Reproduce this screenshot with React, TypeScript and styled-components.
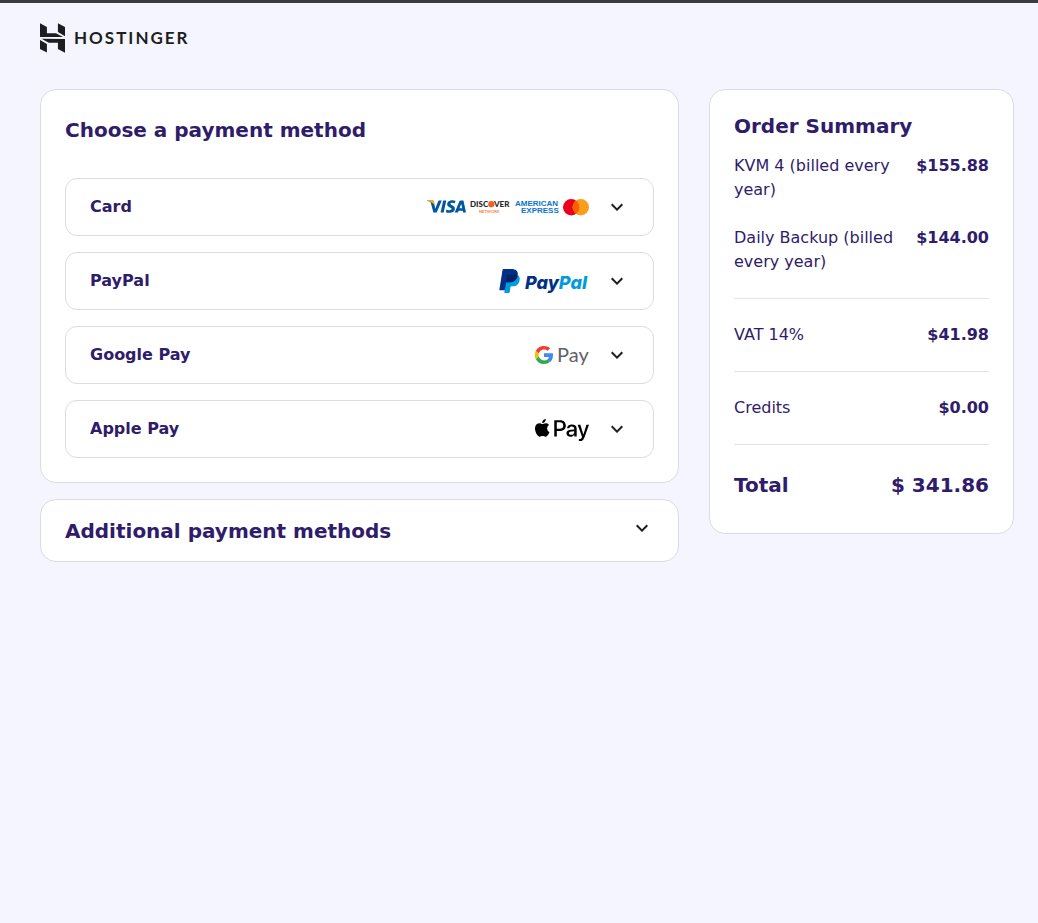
import React from "react";
import styled, { createGlobalStyle } from "styled-components";
import { FaApplePay } from "react-icons/fa";
import { SiVisa } from "react-icons/si";

const GlobalStyle = createGlobalStyle`
  *, *::before, *::after { box-sizing: border-box; }
  body {
    margin: 0;
    background: #f4f5ff;
    color: #2f1c6a;
    font-family: "DejaVu Sans", sans-serif;
    font-size: 16px;
    line-height: 24px;
  }
`;

const Page = styled.div`
  border-top: 3px solid #3b3b3d;
`;

const Header = styled.header`
  display: flex;
  padding: 20px 24px 36px 40px;
`;

const HomeLink = styled.a`
  display: flex;
  align-items: center;
  gap: 9px;
  height: 30px;
  color: #1d1e20;
  text-decoration: none;
`;

const Wordmark = styled.span`
  font-family: Lato, sans-serif;
  font-size: 17px;
  font-weight: 700;
  letter-spacing: 2px;
`;

const Columns = styled.main`
  display: grid;
  grid-template-columns: minmax(0, 1fr) 305px;
  align-items: start;
  gap: 30px;
  padding: 0 24px 24px 40px;
`;

const Stack = styled.div`
  display: flex;
  flex-direction: column;
  gap: 16px;
`;

const Panel = styled.section`
  padding: 24px;
  border: 1px solid #dadce0;
  border-radius: 16px;
  background: #fff;
`;

const Title = styled.h2<{ $tall?: boolean }>`
  margin: 0;
  font-size: 20px;
  font-weight: 700;
  line-height: ${(p) => (p.$tall ? 32 : 24)}px;
`;

const MethodList = styled(Stack)`
  margin-top: 32px;
`;

const Method = styled.button`
  display: flex;
  align-items: center;
  gap: 16px;
  width: 100%;
  height: 58px;
  padding: 0 24px;
  border: 1px solid #dadce0;
  border-radius: 12px;
  background: #fff;
  color: inherit;
  font: inherit;
  font-weight: 700;
  text-align: left;
  cursor: pointer;
`;

const MethodName = styled.span`
  flex: 1;
`;

const Logos = styled.span`
  display: flex;
  align-items: center;
  gap: 4px;

  svg { display: block; }
`;

const ApplePayLogo = styled(FaApplePay)`
  margin-top: 2px;
`;

const MoreMethods = styled.button`
  display: flex;
  align-items: flex-start;
  justify-content: space-between;
  width: 100%;
  padding: 16px 24px 15px;
  border: 1px solid #dadce0;
  border-radius: 16px;
  background: #fff;
  color: inherit;
  font: inherit;
  font-size: 20px;
  font-weight: 700;
  line-height: 30px;
  text-align: left;
  cursor: pointer;
`;

const Lines = styled.dl`
  display: flex;
  flex-direction: column;
  gap: 24px;
  margin: 16px 0 0;
`;

const Line = styled.div<{ $divided?: boolean }>`
  display: flex;
  justify-content: space-between;
  gap: 16px;
  padding-top: ${(p) => (p.$divided ? 24 : 0)}px;
  border-top: ${(p) => (p.$divided ? "1px solid #e2e3e6" : "0")};

  dt, dd { margin: 0; }
  dd { font-weight: 700; white-space: nowrap; }
`;

const TotalLine = styled(Line)`
  padding-bottom: 8px;
  font-size: 20px;
  font-weight: 700;
  line-height: 32px;
`;

const Chevron = () => (
  <svg width="24" height="24" viewBox="0 0 24 24" fill="#1d1e20" aria-hidden="true">
    <path d="M16.59 8.59 12 13.17 7.41 8.59 6 10l6 6 6-6z" />
  </svg>
);

const HostingerMark = () => (
  <svg width="25" height="30" viewBox="1.8 0 20.4 24" fill="currentColor" aria-hidden="true">
    <path d="M16.415 0v7.16l5.785 3.384V2.949L16.415 0ZM1.8 0v11.237h18.815L14.89 8.09l-7.457-.003V3.024L1.8 0Zm14.615 20.894v-5.019l-7.514-.005c.007.033-5.82-3.197-5.82-3.197l19.119.091V24l-5.785-3.106ZM1.8 13.551v7.343l5.633 2.949v-6.988L1.8 13.551Z" />
  </svg>
);

const VisaLogo = () => (
  <svg width="39" height="14" viewBox="0 0 39 14" aria-label="Visa">
    <SiVisa x="0" y="-13" size={39} color="#01579f" />
    <path d="M0 0h5q1.500 0 2 1.500l1 4.500Q6 2 0 .4z" fill="#f7a32b" />
  </svg>
);

const DiscoverLogo = () => (
  <svg width="40" height="14" viewBox="0 0 40 14" fontFamily="Lato, sans-serif" fontWeight="900">
    <text x="0" y="7" fontSize="8" fill="#25282b">DISC</text>
    <circle cx="21.300" cy="4.200" r="3.100" fill="#f26122" />
    <text x="24" y="7" fontSize="8" fill="#25282b">VER</text>
    <text x="9" y="13" fontSize="4" fontWeight="700" fill="#f47b3a">NETWORK</text>
  </svg>
);

const AmexLogo = () => (
  <svg
    width="45"
    height="14"
    viewBox="0 0 45 14"
    fill="#0b74d1"
    fontFamily="Liberation Sans, sans-serif"
    fontWeight="700"
    fontSize="8"
  >
    <text x="1" y="6">AMERICAN</text>
    <text x="7" y="13">EXPRESS</text>
  </svg>
);

const MastercardLogo = () => (
  <svg width="26" height="17" viewBox="0 0 26 17" aria-label="Mastercard">
    <circle cx="8.200" cy="8.200" r="8.200" fill="#eb001b" />
    <circle cx="17.800" cy="8.200" r="8.200" fill="#f79e1b" />
    <path d="M13 1.550a8.200 8.200 0 0 1 0 13.300 8.200 8.200 0 0 1 0-13.300z" fill="#ff5f00" />
  </svg>
);

const PayPalLogo = () => (
  <svg width="90" height="26" viewBox="0 0 90 26" aria-label="PayPal">
    <svg width="21" height="24" x="0" y="1" viewBox="0 0 25.400 30.200">
      <path fill="#003087" d="M7.266 29.154l.523-3.322-1.165-.027H1.061L4.927 1.292a.316.316 0 01.314-.268h9.380c3.114 0 5.263.648 6.385 1.927.526.6.861 1.227 1.023 1.917.17.724.173 1.589.007 2.644l-.012.077v.676l.526.298a3.690 3.690 0 011.065.812c.45.513.741 1.165.864 1.938.127.795.085 1.741-.123 2.812-.24 1.232-.628 2.305-1.152 3.183a6.547 6.547 0 01-1.825 2c-.696.494-1.523.869-2.458 1.109-.906.236-1.939.355-3.072.355h-.73c-.522 0-1.029.188-1.427.525a2.210 2.210 0 00-.744 1.328l-.055.299-.924 5.855-.042.215c-.011.068-.03.102-.058.125a.155.155 0 01-.096.035H7.266z" />
      <path fill="#009cde" d="M23.048 7.667c-.028.179-.06.362-.096.55-1.237 6.351-5.469 8.545-10.874 8.545H9.326c-.661 0-1.218.48-1.321 1.132L6.596 26.830l-.399 2.533a.704.704 0 00.695.814h4.881c.578 0 1.069-.42 1.160-.99l.048-.248.919-5.832.059-.32c.09-.572.582-.992 1.160-.992h.73c4.729 0 8.431-1.920 9.513-7.476.452-2.321.218-4.259-.978-5.622a4.667 4.667 0 00-1.336-1.030z" />
      <path fill="#012169" d="M21.754 7.151a9.757 9.757 0 00-1.203-.267 15.284 15.284 0 00-2.426-.177h-7.352a1.172 1.172 0 00-1.159.992L8.050 17.605l-.045.289a1.336 1.336 0 011.321-1.132h2.752c5.405 0 9.637-2.195 10.874-8.545.037-.188.068-.371.096-.55a6.594 6.594 0 00-1.017-.429 9.045 9.045 0 00-.277-.087z" />
      <path fill="#003087" d="M9.614 7.699a1.169 1.169 0 011.159-.991h7.352c.871 0 1.684.057 2.426.177a9.757 9.757 0 011.481.353c.365.121.704.264 1.017.429.368-2.347-.003-3.945-1.272-5.392C20.378.682 17.853 0 14.622 0h-9.380c-.66 0-1.223.48-1.325 1.133L.01 25.898a.806.806 0 00.795.932h5.791l1.454-9.225 1.564-9.906z" />
    </svg>
    <text
      x="26"
      y="21"
      fontFamily="Inter, sans-serif"
      fontSize="18"
      fontStyle="italic"
      fontWeight="800"
      fill="#003087"
    >
      Pay<tspan fill="#009cde">Pal</tspan>
    </text>
  </svg>
);

const GooglePayLogo = () => (
  <svg width="54" height="28" viewBox="0 0 54 28" aria-label="Google Pay">
    <svg width="18" height="18" x="0" y="5" viewBox="4 4 40 40">
      <path fill="#4285f4" d="M43.600 20.100H24v8.200h11.200a9.600 9.600 0 0 1-4.150 6.300l6.700 5.200C41.700 36.200 44 30.900 44 24.400c0-1.500-.1-2.900-.4-4.300z" />
      <path fill="#34a853" d="M24 44c5.500 0 10.100-1.800 13.500-4.900l-6.600-5.100c-1.800 1.200-4.150 2-6.900 2-5.300 0-9.800-3.600-11.400-8.400l-6.800 5.200A20 20 0 0 0 24 44z" />
      <path fill="#fbbc04" d="M12.600 27.900a12 12 0 0 1 0-7.700l-6.800-5.300a20 20 0 0 0 0 18.200z" />
      <path fill="#ea4335" d="M24 11.900c3 0 5.700 1 7.800 3.100l5.900-5.900C34.100 5.800 29.500 4 24 4A20 20 0 0 0 5.800 15l6.800 5.300c1.600-4.800 6.100-8.400 11.400-8.400z" />
    </svg>
    <text x="22" y="21" fontFamily="Lato, sans-serif" fontSize="20" fontWeight="400" fill="#5f6368">
      Pay
    </text>
  </svg>
);

const methods = [
  {
    name: "Card",
    logo: (
      <>
        <VisaLogo />
        <DiscoverLogo />
        <AmexLogo />
        <MastercardLogo />
      </>
    ),
  },
  { name: "PayPal", logo: <PayPalLogo /> },
  { name: "Google Pay", logo: <GooglePayLogo /> },
  { name: "Apple Pay", logo: <ApplePayLogo size={54} color="#000" /> },
];

const lines = [
  { label: "KVM 4 (billed every year)", price: "$155.88", divided: false },
  { label: "Daily Backup (billed every year)", price: "$144.00", divided: false },
  { label: "VAT 14%", price: "$41.98", divided: true },
  { label: "Credits", price: "$0.00", divided: true },
];

export default function App() {
  return (
    <Page>
      <GlobalStyle />
      <Header>
        <HomeLink href="#">
          <HostingerMark />
          <Wordmark>HOSTINGER</Wordmark>
        </HomeLink>
      </Header>
      <Columns>
        <Stack>
          <Panel>
            <Title $tall>Choose a payment method</Title>
            <MethodList>
              {methods.map((m) => (
                <Method key={m.name} type="button" aria-expanded={false}>
                  <MethodName>{m.name}</MethodName>
                  <Logos>{m.logo}</Logos>
                  <Chevron />
                </Method>
              ))}
            </MethodList>
          </Panel>
          <MoreMethods type="button" aria-expanded={false}>
            Additional payment methods
            <Chevron />
          </MoreMethods>
        </Stack>
        <Panel>
          <Title>Order Summary</Title>
          <Lines>
            {lines.map((l) => (
              <Line key={l.label} $divided={l.divided}>
                <dt>{l.label}</dt>
                <dd>{l.price}</dd>
              </Line>
            ))}
            <TotalLine $divided>
              <dt>Total</dt>
              <dd>$ 341.86</dd>
            </TotalLine>
          </Lines>
        </Panel>
      </Columns>
    </Page>
  );
}
